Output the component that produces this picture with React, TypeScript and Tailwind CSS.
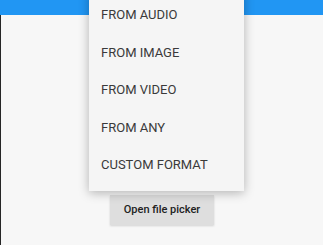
import React from 'react';

const items = ['FROM AUDIO', 'FROM IMAGE', 'FROM VIDEO', 'FROM ANY', 'CUSTOM FORMAT'];

export default function App() {
  return (
    <div
      className="relative flex h-[245px] w-[323px] flex-col overflow-hidden bg-[#f7f7f7]"
      style={{ fontFamily: 'Roboto, "Liberation Sans", sans-serif' }}
    >
      <div className="h-[15px] shrink-0 bg-[#2196f3]" />
      <div className="flex flex-1 justify-center border-l border-[#262626] pt-[180px]">
        <button className="h-[30px] w-[104px] bg-[#dedede] text-[11px] font-medium text-[#222] shadow-[0_1px_2px_rgba(0,0,0,0.15)]">
          Open file picker
        </button>
      </div>

      {/* popup menu */}
      <div className="absolute left-[89px] top-[-12px] w-[155px] bg-[#f5f5f5] pt-[8px] pb-[7px] shadow-[0_2px_10px_rgba(0,0,0,0.28)]">
        {items.map((label) => (
          <div key={label} className="flex h-[37.6px] items-center pl-[12px] text-[13px] text-[#3a3a3a]">
            {label}
          </div>
        ))}
      </div>
    </div>
  );
}
